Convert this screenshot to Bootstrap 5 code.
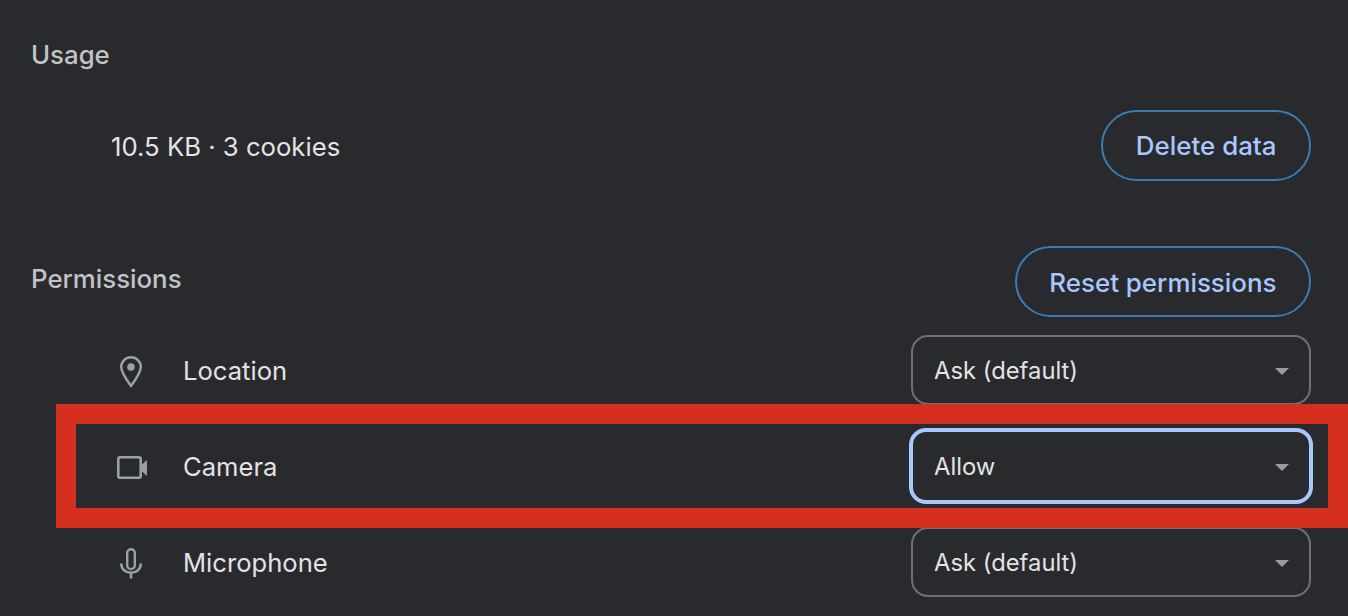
<!doctype html>
<html lang="en">
<head>
<meta charset="utf-8">
<title>Site settings</title>
<link href="https://cdn.jsdelivr.net/npm/bootstrap@5.3.0/dist/css/bootstrap.min.css" rel="stylesheet">
<style>
html,body{height:616px;overflow:hidden}
body{background:#292a2e;color:#e3e3e3;font-family:Inter,"Liberation Sans",sans-serif;font-size:25.6px}
.page-wrap{position:relative;height:616px;padding:0 37px 0 31px}
.sec-label{color:#c2c3c5;font-weight:500;font-size:25.8px;line-height:30px}
.usage-label{padding-top:40px}
.usage-row{height:70px;margin-top:40px;padding-left:80px}
.usage-text{padding-top:4px;font-size:25.7px}
.perm-head{margin-top:66px;height:71px}
.perm-head .sec-label{margin-top:18px}
.pill{height:71px;border:2px solid #3b7cb1;border-radius:36px;color:#a8c7fa;background:transparent;font-size:25.9px;font-weight:500;padding:2px 32.500px 0;line-height:1}
.pill:hover{color:#a8c7fa;border-color:#3b7cb1}
.perm-row{height:96px;padding-left:80px}
.perm-list{margin-top:6px}
.ico-box{width:40px;height:40px;flex:none;margin-right:32px}
.picker{width:400px;height:70px;margin-bottom:2px;border:2px solid #6f7073;border-radius:17px;color:#e3e3e3;background:transparent;font-size:23.8px;padding:2px 20px 0 21px;line-height:1;text-align:left}
.picker:hover,.picker:focus{color:#e3e3e3}
.picker.dropdown-toggle::after{border:0;border-top:7px solid #999a9c;border-left:7px solid transparent;border-right:7px solid transparent;margin:0}
.picker.is-focused{width:404px;height:76px;border:4px solid #a8c7fa;margin-right:-2px;padding:2px 20px 0 21px}
.callout{position:absolute;left:56px;top:404px;width:1292px;height:124px;border:20px solid #d52f20;pointer-events:none}
</style>
</head>
<body>
<main class="page-wrap">
  <div class="sec-label usage-label">Usage</div>
  <div class="usage-row d-flex align-items-center justify-content-between">
    <span class="usage-text">10.5 KB · 3 cookies</span>
    <button type="button" class="btn pill">Delete data</button>
  </div>
  <div class="perm-head d-flex align-items-start justify-content-between">
    <div class="sec-label">Permissions</div>
    <button type="button" class="btn pill">Reset permissions</button>
  </div>
  <div class="perm-list">
    <div class="perm-row d-flex align-items-center">
      <svg class="ico-box" viewBox="0 0 40 40" aria-hidden="true"><path d="M20 6.200C14.600 6.200 10.200 10.500 10.200 16c0 5 3.600 10.500 9.800 19 6.200-8.500 9.800-14 9.800-19 0-5.500-4.400-9.800-9.800-9.800z" fill="none" stroke="#9aa0a6" stroke-width="2.500" stroke-linejoin="round"/><circle cx="20" cy="16" r="3.800" fill="#9aa0a6"/></svg>
      <span>Location</span>
      <button type="button" class="btn picker dropdown-toggle d-flex align-items-center justify-content-between ms-auto">Ask (default)</button>
    </div>
    <div class="perm-row d-flex align-items-center">
      <svg class="ico-box" viewBox="0 0 40 40" aria-hidden="true"><rect x="7.300" y="10.300" width="22.400" height="20.400" rx="1.800" fill="none" stroke="#9aa0a6" stroke-width="2.600"/><path d="M31 17.500 36 13V29l-5-4.500z" fill="#9aa0a6"/></svg>
      <span>Camera</span>
      <button type="button" class="btn picker is-focused dropdown-toggle d-flex align-items-center justify-content-between ms-auto">Allow</button>
    </div>
    <div class="perm-row d-flex align-items-center">
      <svg class="ico-box" viewBox="0 0 40 40" aria-hidden="true"><rect x="16.200" y="6.200" width="7.600" height="19.800" rx="3.800" fill="none" stroke="#9aa0a6" stroke-width="2.400"/><path d="M10.200 20.500c0 5.500 4.300 9.300 9.800 9.300s9.800-3.800 9.800-9.300M20 29.800V35.500" fill="none" stroke="#9aa0a6" stroke-width="2.500"/></svg>
      <span>Microphone</span>
      <button type="button" class="btn picker dropdown-toggle d-flex align-items-center justify-content-between ms-auto">Ask (default)</button>
    </div>
  </div>
  <div class="callout"></div>
</main>
<script src="https://cdn.jsdelivr.net/npm/bootstrap@5.3.0/dist/js/bootstrap.bundle.min.js"></script>
</body>
</html>
